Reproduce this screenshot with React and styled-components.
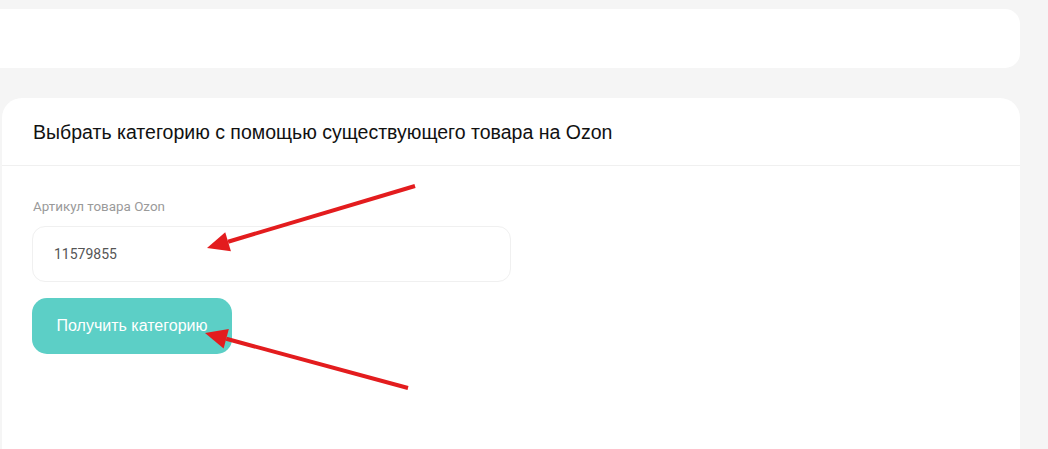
import React from 'react';
import styled, { createGlobalStyle } from 'styled-components';

const GlobalStyle = createGlobalStyle`
  html, body {
    margin: 0;
    padding: 0;
    background: #f5f5f5;
    overflow: hidden;
  }
  body {
    font-family: "Liberation Sans", Arial, sans-serif;
  }
`;

const Page = styled.div`
  position: relative;
  width: 1048px;
  height: 449px;
  overflow: hidden;
  display: flex;
  flex-direction: column;
  gap: 30px;
  padding: 9px 28px 0 0;
  box-sizing: border-box;
`;

const TopCard = styled.div`
  height: 59px;
  margin-left: -20px;
  background: #fff;
  border-radius: 15px;
  flex-shrink: 0;
`;

const Card = styled.section`
  margin-left: 2px;
  background: #fff;
  border-radius: 20px 20px 0 0;
  flex: 1;
  display: flex;
  flex-direction: column;
`;

const CardHeader = styled.div`
  height: 68px;
  display: flex;
  align-items: center;
  padding: 2px 31px 0;
  box-sizing: border-box;
  border-bottom: 1px solid #f0f0f0;
`;

const Title = styled.h2`
  margin: 0;
  font-family: "Liberation Sans", Arial, sans-serif;
  font-weight: 400;
  font-size: 19.5px;
  color: #111;
`;

const CardBody = styled.div`
  padding: 33px 30px 0;
  display: flex;
  flex-direction: column;
  align-items: flex-start;
`;

const Label = styled.label`
  font-family: Roboto, "Noto Sans", sans-serif;
  font-size: 13.4px;
  line-height: 16px;
  color: #9a9a9a;
  margin-left: 1px;
  margin-bottom: 11px;
`;

const Input = styled.input`
  width: 479px;
  height: 56px;
  box-sizing: border-box;
  border: 1px solid #f0f0f0;
  border-radius: 13px;
  padding: 0 21px;
  font-family: Roboto, "Noto Sans", sans-serif;
  font-size: 14px;
  color: #555;
  background: #fff;
  outline: none;
  margin-bottom: 16px;
`;

const Button = styled.button`
  width: 200px;
  height: 56px;
  border: none;
  border-radius: 15px;
  background: #5ccfc6;
  color: #fff;
  font-family: "Liberation Sans", Arial, sans-serif;
  font-size: 16px;
  padding: 0;
  cursor: pointer;
`;

const Overlay = styled.svg`
  position: absolute;
  left: 0;
  top: 0;
  pointer-events: none;
`;

const Arrow = ({ x1, y1, x2, y2 }) => {
  const ang = Math.atan2(y2 - y1, x2 - x1);
  const len = 22;
  const half = 10;
  const bx = x2 - Math.cos(ang) * len;
  const by = y2 - Math.sin(ang) * len;
  const px = -Math.sin(ang) * half;
  const py = Math.cos(ang) * half;
  return (
    <g fill="#e31c1e" stroke="#e31c1e">
      <line x1={x1} y1={y1} x2={bx} y2={by} strokeWidth="4" strokeLinecap="butt" />
      <polygon points={`${x2},${y2} ${bx + px},${by + py} ${bx - px},${by - py}`} stroke="none" />
    </g>
  );
};

export default function App() {
  return (
    <>
      <GlobalStyle />
      <Page>
        <TopCard />
        <Card>
          <CardHeader>
            <Title>Выбрать категорию с помощью существующего товара на Ozon</Title>
          </CardHeader>
          <CardBody>
            <Label>Артикул товара Ozon</Label>
            <Input defaultValue="11579855" />
            <Button>Получить категорию</Button>
          </CardBody>
        </Card>
        <Overlay width="1048" height="449">
          <Arrow x1={415} y1={186} x2={207} y2={248} />
          <Arrow x1={408} y1={388} x2={205} y2={333} />
        </Overlay>
      </Page>
    </>
  );
}
